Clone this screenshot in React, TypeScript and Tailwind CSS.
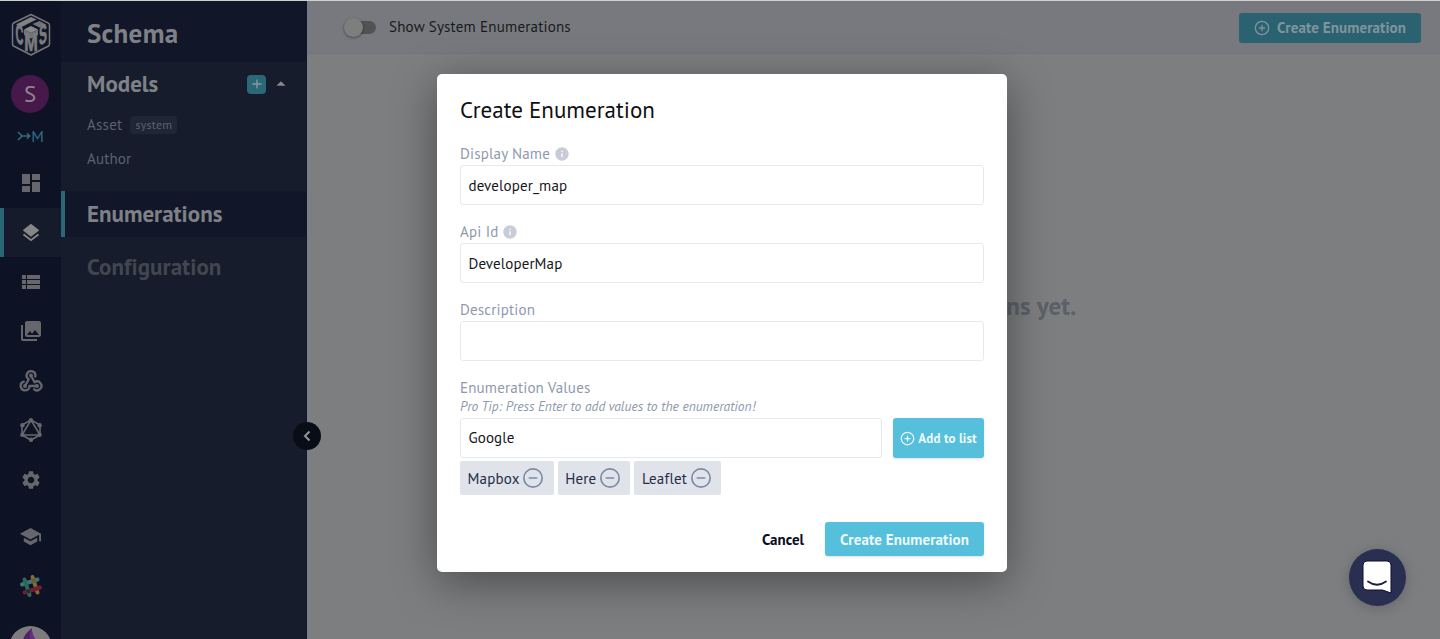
import type { ReactNode } from "react";
import {
  MdDashboard,
  MdLayers,
  MdViewList,
  MdPhotoLibrary,
  MdSettings,
  MdSchool,
  MdInfo,
  MdArrowDropUp,
} from "react-icons/md";
import { FiPlusCircle, FiMinusCircle } from "react-icons/fi";

const values = ["Mapbox", "Here", "Leaflet"];

function Logo() {
  return (
    <svg width="40" height="44" viewBox="0 0 40 44">
      <path d="M20 1.500 37 9.800Q38.500 10.500 38.500 12V31Q38.500 32.500 37.500 33L20 42 2.500 33Q1.500 32.500 1.500 31V12Q1.500 10.500 3 9.800Z" fill="#10162a" stroke="#77777a" strokeWidth="1.500" strokeLinejoin="round" />
      <path d="M20 4 25.500 6.600 10.500 14 5 11.500Z" fill="#828283" />
      <path d="M28.500 8 35 11.500 28.500 14.500 21.500 11Z" fill="#747476" />
      <path d="M20 13 27 16.500 20 20 13 16.500Z" fill="#8a8a8b" />
      <path d="M13 16.500 20 20 27 16.500V22L20 25.500 13 22Z" fill="#737376" />
      <g fill="#7c7c7e" stroke="#7c7c7e" strokeWidth=".7" fontFamily="Liberation Sans" fontWeight="700" textAnchor="middle">
        <text transform="matrix(.5 .26 0 1.200 8.500 30.500)" fontSize="22">C</text>
        <text transform="matrix(.74 0 0 1.050 20 37.500)" fontSize="22">M</text>
        <text transform="matrix(.54 -.28 0 1.200 32 30.500)" fontSize="22">S</text>
      </g>
    </svg>
  );
}

function MergeMark() {
  return (
    <svg width="14" height="10" viewBox="0 0 14 10" fill="none" stroke="#2f6f80" strokeWidth="1.5">
      <path d="M1 1 5 5 1 9M5 5H12.500M10 2.300 12.700 5 10 7.700" />
    </svg>
  );
}

function WebhookMark() {
  return (
    <svg width="24" height="24" viewBox="0 0 24 24" fill="none" stroke="currentColor" strokeWidth="2.300" strokeLinecap="round" strokeLinejoin="round">
      <path d="M16.300 7.500A4.400 4.400 0 1 0 9.700 10.300L6.300 16.800" />
      <path d="M12 6.700 15.600 13.200A4.400 4.400 0 1 1 15.200 20.300" />
      <path d="M4.800 12.700A4.400 4.400 0 1 0 10.500 17H17.500" />
      <g fill="currentColor" stroke="none">
        <circle cx="12" cy="6.500" r="2" />
        <circle cx="6" cy="17" r="2" />
        <circle cx="18" cy="17" r="2" />
      </g>
    </svg>
  );
}

function GraphMark() {
  return (
    <svg width="24" height="26" viewBox="0 0 24 26" fill="none" stroke="currentColor" strokeWidth="1.600">
      <path d="M12 3 21 8V18L12 23 3 18V8Z" />
      <path d="M12 3 21 18H3Z" />
      <g fill="currentColor" stroke="none">
        <circle cx="12" cy="3.300" r="2.200" />
        <circle cx="20.600" cy="8.200" r="2.200" />
        <circle cx="20.600" cy="17.800" r="2.200" />
        <circle cx="12" cy="22.700" r="2.200" />
        <circle cx="3.400" cy="17.800" r="2.200" />
        <circle cx="3.400" cy="8.200" r="2.200" />
      </g>
    </svg>
  );
}

function SlackMark() {
  return (
    <svg width="24" height="24" viewBox="0 0 24 24" fill="none" strokeWidth="4" strokeLinecap="round">
      <path d="M3 10.500 18.500 5.500" stroke="#43727c" />
      <path d="M13.500 3 18.500 18.500" stroke="#8a6a2b" />
      <path d="M5.500 18.500 21 13.500" stroke="#701c3b" />
      <path d="M5.500 5.500 10.500 21" stroke="#2c6a58" />
      <path d="M7.500 17.900 11 16.700" stroke="#2b2a33" strokeLinecap="butt" />
      <path d="M13.200 7.300 16.500 6.200" stroke="#53633d" strokeLinecap="butt" />
    </svg>
  );
}

function RailItem({ children, active }: { children: ReactNode; active?: boolean }) {
  return (
    <div className={active
      ? "h-[49.4px] w-full flex items-center justify-center bg-[#151b2a] border-l-4 border-[#2b6675] pr-1 text-[#858688]"
      : "h-[49.4px] w-full flex items-center justify-center text-[#65676d]"}>
      {children}
    </div>
  );
}

function Rail() {
  return (
    <div className="w-[61px] shrink-0 h-full bg-[#0d1325] flex flex-col items-center overflow-hidden">
      <div className="mt-[12px] h-11"><Logo /></div>
      <div className="mt-[18px] mr-px size-[38px] shrink-0 rounded-full bg-[#47184a] text-[#8d8490] text-[23px] flex items-center justify-center">S</div>
      <div className="mt-[13px] h-5 shrink-0 flex items-center text-[16px] text-[#2f6f80]">
        <MergeMark />
        <span>M</span>
      </div>
      <div className="mt-[12.5px] w-full shrink-0">
        <RailItem><MdDashboard size={24} /></RailItem>
        <RailItem active><MdLayers size={22} /></RailItem>
        <RailItem><MdViewList size={24} /></RailItem>
        <RailItem><MdPhotoLibrary size={24} /></RailItem>
        <RailItem><WebhookMark /></RailItem>
        <RailItem><GraphMark /></RailItem>
        <RailItem><MdSettings size={22} /></RailItem>
      </div>
      <div className="mt-[7.5px] w-full shrink-0">
        <RailItem><MdSchool size={23} /></RailItem>
        <RailItem><SlackMark /></RailItem>
      </div>
      <div className="mt-[15px] size-[43px] shrink-0 rounded-full bg-[#7d7b7e] flex justify-center">
        <svg width="24" height="40" viewBox="0 0 24 40">
          <path d="M13 2C5 8 3 14 3 22L12 36 21 22C21 16 12 12 13 2Z" fill="#4d2464" />
          <path d="M13 2C9 10 11 16 14 24L21 22C21 16 12 12 13 2Z" fill="#67307c" />
        </svg>
      </div>
    </div>
  );
}

function Sidebar() {
  return (
    <div className="relative w-[246px] shrink-0 h-full bg-[#161c2b] border-r border-[#0f1334] text-[#7f8187]">
      <div className="h-[61px] bg-[#111628] pl-[26px] flex items-center text-[27px] font-bold">
        <span className="tracking-[0.3px] mt-[3px]">Schema</span>
      </div>
      <div className="h-[46px] pl-[26px] pr-[18px] pb-[2px] flex items-center">
        <span className="text-[23px] font-bold pt-px">Models</span>
        <div className="ml-auto mr-px size-[19px] rounded bg-[#2b6877] flex items-center justify-center">
          <svg width="10" height="10" viewBox="0 0 10 10" stroke="#8b9a9f" strokeWidth="1.3"><path d="M5 .5V9.500M.5 5H9.500" /></svg>
        </div>
        <MdArrowDropUp size={22} className="ml-[3px] -mr-[4px] text-[#88898c]" />
      </div>
      <div className="h-[34px] pl-[26px] flex items-center text-[15px] tracking-[0.25px] text-[#5d626e]">
        Asset
        <span className="ml-2 h-[18px] w-[47px] rounded bg-[#202636] text-[12px] flex items-center justify-center">system</span>
      </div>
      <div className="h-[34px] pl-[26px] flex items-center text-[15px] tracking-[0.15px] text-[#5d626e]">Author</div>
      <div className="mt-[15px] h-[46px] bg-[#111628] border-l-4 border-[#2b6877] pl-[22px] flex items-center text-[23px] font-bold">
        Enumerations
      </div>
      <div className="h-[60px] pl-[26px] flex items-center text-[23px] tracking-[0.05px] font-bold text-[#414650]">
        Configuration
      </div>
      <div className="absolute -right-[15px] top-[421px] size-7 rounded-full bg-[#080d18] flex items-center justify-center">
        <svg width="8" height="12" viewBox="0 0 8 12" fill="none" stroke="#959595" strokeWidth="2"><path d="M6.500 1.500 2 6 6.500 10.500" /></svg>
      </div>
    </div>
  );
}

function Content() {
  return (
    <div className="flex-1 h-full flex flex-col bg-[#7d7e80]">
      <div className="h-[53px] shrink-0 bg-[#77797e] border-b border-[#737578] pl-[38px] pr-[19px] flex items-center">
        <div className="w-8 h-5 flex items-center">
          <div className="ml-[5px] w-[26px] h-[13px] rounded-full bg-[#515254] flex items-center">
            <div className="-ml-[6px] size-[19px] shrink-0 rounded-full bg-[#7e7e7e] shadow-[0_1px_3px_rgba(0,0,0,0.4)]" />
          </div>
        </div>
        <span className="ml-[12px] text-[15px] tracking-[0.2px] text-[#18191c]">Show System Enumerations</span>
        <div className="ml-auto mt-px w-[182px] h-[30px] rounded-[3px] bg-[#2b6271] text-[#80949b] text-[15px] font-bold flex items-center justify-center gap-[7px]">
          <FiPlusCircle size={16} />
          <span className="tracking-[0.1px] pt-px">Create Enumeration</span>
        </div>
      </div>
      <div className="pt-[234px] pl-[3px] text-center text-[25px] tracking-[0.1px] font-bold text-[#5c6068] whitespace-nowrap">
        You don't have any enumerations yet.
      </div>
    </div>
  );
}

function Field({ label, value, info }: { label: string; value: string; info?: boolean }) {
  return (
    <div className="h-[78px]">
      <div className="h-[22px] flex items-center gap-[4px] text-[15px] tracking-[0.18px] text-[#8e99ae]">
        <span>{label}</span>
        {info && <MdInfo size={16} className="text-[#c7ccd6]" />}
      </div>
      <div className="h-10 rounded-[3px] border border-[#e8e9ec] pl-[7.5px] pt-[2px] flex items-center text-[15px] tracking-[0.12px] text-[#17181b]">{value}</div>
    </div>
  );
}

function Dialog() {
  return (
    <div className="w-[570px] h-[498px] rounded-[5px] bg-white px-[23px] shadow-[0_10px_45px_rgba(0,0,0,0.4)]">
      <div className="pt-[19px] h-[69px] text-[23px] leading-[34px] text-[#0e0f12]">Create Enumeration</div>
      <Field label="Display Name" value="developer_map" info />
      <Field label="Api Id" value="DeveloperMap" info />
      <Field label="Description" value="" />
      <div className="h-[22px] flex items-center text-[15px] tracking-[0.18px] text-[#8e99ae]">Enumeration Values</div>
      <div className="h-[19px] text-[13.5px] leading-[15px] italic text-[#8e99ae]">Pro Tip: Press Enter to add values to the enumeration!</div>
      <div className="flex gap-[11px]">
        <div className="w-[422px] h-10 rounded-[3px] border border-[#e8e9ec] pl-[7.5px] pt-px flex items-center text-[15px] tracking-[0.1px] text-[#17181b]">Google</div>
        <div className="w-[91px] h-10 rounded-[3px] bg-[#56bfdb] text-[#ecf9fd] text-[13px] font-bold flex items-center justify-center gap-[3px] shadow-sm">
          <FiPlusCircle size={15} />
          <span className="tracking-[0.1px] pt-px">Add to list</span>
        </div>
      </div>
      <div className="mt-[3px] flex gap-1">
        {values.map((v) => (
          <div key={v} className="h-[34px] rounded-[2px] bg-[#e0e3e9] pl-[7.5px] pr-[9.5px] flex items-center gap-[2.5px] text-[15px] tracking-[0.2px] text-[#252c49]">
            <span className="pt-[2px]">{v}</span>
            <FiMinusCircle size={22} strokeWidth={1.8} className="text-[#7b8ba5]" />
          </div>
        ))}
      </div>
      <div className="mt-[27px] flex justify-end items-center text-[15px]">
        <span className="mr-[21px] pt-[2px] font-semibold text-[#0b0c25]">Cancel</span>
        <div className="w-[159px] h-[34px] pt-[2px] rounded-[3px] bg-[#56bfdb] text-[#ecf9fd] font-bold flex items-center justify-center shadow-sm">
          <span className="tracking-[0.1px]">Create Enumeration</span>
        </div>
      </div>
    </div>
  );
}

export default function App() {
  return (
    <div className="relative h-[639px] overflow-hidden border-t border-[#ccd3cc] font-['PT_Sans','Noto_Sans',sans-serif]">
      <div className="h-full flex">
        <Rail />
        <Sidebar />
        <Content />
      </div>
      <div className="absolute inset-0 flex justify-center items-start pt-[73px] pl-1">
        <Dialog />
      </div>
      {/* chat launcher */}
      <div className="absolute right-[34px] bottom-[33px] size-[57px] rounded-full bg-[#2a2e50] shadow-[0_2px_14px_rgba(0,0,0,0.2)] flex items-center justify-center pr-px pb-px">
        <svg width="30" height="34" viewBox="0 0 30 34">
          <path d="M5 1H25Q29 1 29 5V33L20.500 30H5Q1 30 1 26V5Q1 1 5 1Z" fill="#fff" stroke="#0b0e33" strokeWidth="1" />
          <path d="M6 21.500Q15 28 24 21.500" fill="none" stroke="#1c2040" strokeWidth="1.8" strokeLinecap="round" />
        </svg>
      </div>
    </div>
  );
}
